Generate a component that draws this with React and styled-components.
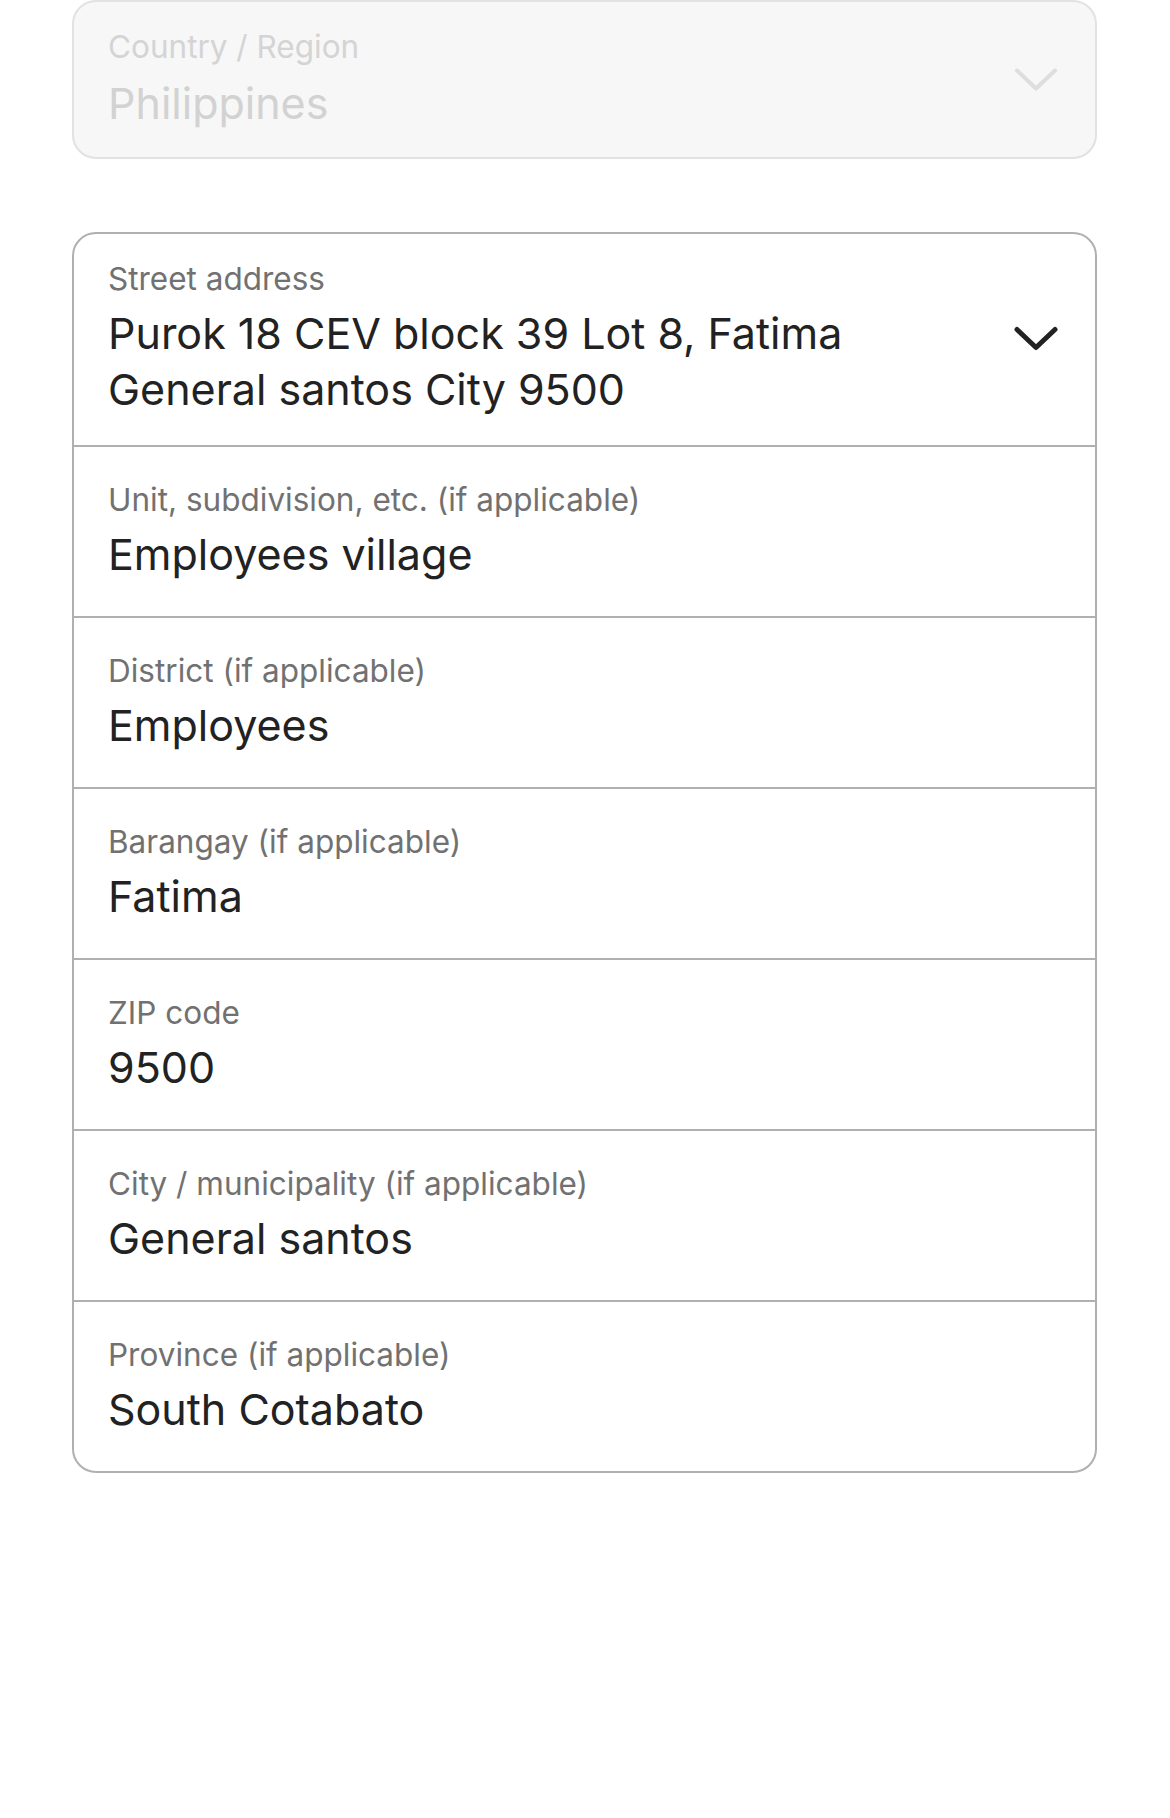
import React from "react";
import styled, { createGlobalStyle } from "styled-components";

const Global = createGlobalStyle`
  html, body { margin: 0; padding: 0; background: #ffffff; }
  body { font-family: Inter, "Noto Sans", "Liberation Sans", sans-serif; -webkit-font-smoothing: antialiased; }
  * { box-sizing: border-box; }
`;

const Page = styled.div`
  width: 1170px;
  min-height: 1818px;
  padding: 0 73px 0 72px;
  display: flex;
  flex-direction: column;
  gap: 73px;
  background: #ffffff;
`;

const Card = styled.div`
  border: 2px solid ${(p) => (p.$disabled ? "#e2e2e2" : "#b0b0b0")};
  border-radius: 24px;
  background: ${(p) => (p.$disabled ? "#f7f7f7" : "#ffffff")};
  overflow: hidden;
  display: flex;
  flex-direction: column;
`;

const Row = styled.div`
  display: flex;
  align-items: center;
  padding: ${(p) => p.$pt}px 37px ${(p) => p.$pb}px 34px;
  & + & {
    border-top: 2px solid #b0b0b0;
  }
`;

const Field = styled.div`
  flex: 1;
  display: flex;
  flex-direction: column;
  gap: ${(p) => p.$gap}px;
`;

const Label = styled.div`
  font-size: 31.5px;
  line-height: 40px;
  color: ${(p) => (p.$disabled ? "#d4d4d4" : "#717171")};
`;

const Value = styled.div`
  font-size: 43px;
  line-height: 56px;
  color: ${(p) => (p.$disabled ? "#d2d2d2" : "#222222")};
  max-width: 820px;
`;

const Chevron = ({ color, weight }) => (
  <svg width="44" height="25" viewBox="0 0 44 25" fill="none">
    <polyline
      points="3,3.5 22,21.5 41,3.5"
      stroke={color}
      strokeWidth={weight}
      strokeLinecap="round"
      strokeLinejoin="round"
    />
  </svg>
);

const fields = [
  { label: "Unit, subdivision, etc. (if applicable)", value: "Employees village" },
  { label: "District (if applicable)", value: "Employees" },
  { label: "Barangay (if applicable)", value: "Fatima" },
  { label: "ZIP code", value: "9500" },
  { label: "City / municipality (if applicable)", value: "General santos" },
  { label: "Province (if applicable)", value: "South Cotabato" },
];

export default function App() {
  return (
    <>
      <Global />
      <Page>
        <Card $disabled>
          <Row $pt={25} $pb={26}>
            <Field $gap={8}>
              <Label $disabled>Country / Region</Label>
              <Value $disabled>Philippines</Value>
            </Field>
            <Chevron color="#dedede" weight={4} />
          </Row>
        </Card>
        <Card>
          <Row $pt={25} $pb={28}>
            <Field $gap={6}>
              <Label>Street address</Label>
              <Value>Purok 18 CEV block 39 Lot 8, Fatima General santos City 9500</Value>
            </Field>
            <Chevron color="#222222" weight={5} />
          </Row>
          {fields.map((f) => (
            <Row key={f.label} $pt={33} $pb={34}>
              <Field $gap={6}>
                <Label>{f.label}</Label>
                <Value>{f.value}</Value>
              </Field>
            </Row>
          ))}
        </Card>
      </Page>
    </>
  );
}
